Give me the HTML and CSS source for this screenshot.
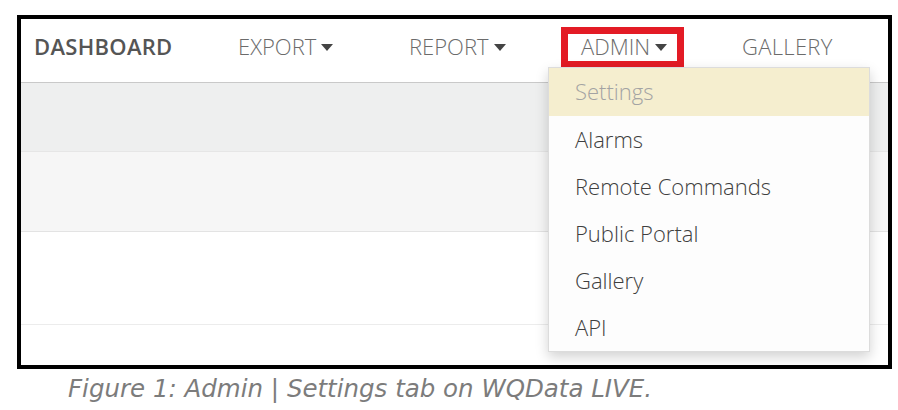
FILE: index.html
```html
<!DOCTYPE html>
<html>
<head>
<meta charset="utf-8">
<link rel="stylesheet" href="styles.css">
</head>
<body>
<div class="figure">
  <nav class="nav">
    <a class="nav-item nav-home">DASHBOARD</a>
    <a class="nav-item nav-export">EXPORT<span class="caret"></span></a>
    <a class="nav-item nav-report">REPORT<span class="caret"></span></a>
    <a class="nav-item nav-admin">ADMIN<span class="caret"></span></a>
    <a class="nav-item nav-gallery">GALLERY</a>
  </nav>
  <div class="band band-a"></div>
  <div class="band band-b"></div>
  <div class="band band-c"></div>
  <div class="band band-d"></div>
  <div class="highlight-box"></div>
  <ul class="dropdown">
    <li class="dd-item dd-active">Settings</li>
    <li class="dd-item">Alarms</li>
    <li class="dd-item">Remote Commands</li>
    <li class="dd-item">Public Portal</li>
    <li class="dd-item">Gallery</li>
    <li class="dd-item">API</li>
  </ul>
</div>
<p class="caption">Figure 1: Admin | Settings tab on WQData LIVE.</p>
</body>
</html>
```
FILE: styles.css
```css
* { box-sizing: border-box; }
html, body { margin: 0; padding: 0; background: #fff; }
body { width: 898px; height: 410px; overflow: hidden; font-family: "Open Sans", "Liberation Sans", sans-serif; }

.figure {
  position: relative;
  margin: 15px 0 0 17px;
  width: 875px;
  height: 354px;
  border: 4px solid #000;
  background: #fff;
  display: flex;
  flex-direction: column;
}

.nav {
  height: 64px;
  border-bottom: 1px solid #c9c9c9;
  display: flex;
  align-items: flex-start;
  padding: 14px 0 0 13px;
  font-size: 22px;
  line-height: 26px;
}
.nav-item {
  color: #6b6b6b;
  font-weight: 300;
  display: flex;
  align-items: center;
  white-space: nowrap;
}
.nav-home { font-weight: 600; color: #555; width: 204px; letter-spacing: 0.3px; }
.nav-export { width: 171px; }
.nav-report { width: 172px; }
.nav-admin { width: 161px; }
.nav-gallery { letter-spacing: 0.3px; }
.caret {
  display: inline-block;
  width: 0; height: 0;
  margin-left: 5px;
  margin-top: 2px;
  border-left: 6px solid transparent;
  border-right: 6px solid transparent;
  border-top: 7px solid #444;
}

.band { flex: none; }
.band-a { height: 69px; background: #eeefef; border-bottom: 1px solid #e6e6e6; }
.band-b { height: 80px; background: #f6f6f6; border-bottom: 1px solid #e3e3e3; }
.band-c { height: 93px; background: #fff; border-bottom: 1px solid #ececec; }
.band-d { flex: 1; background: #fff; }

.highlight-box {
  position: absolute;
  left: 540px;
  top: 8px;
  width: 123px;
  height: 41px;
  border: 7px solid #e31b25;
}

.dropdown {
  position: absolute;
  left: 527px;
  top: 48px;
  width: 322px;
  margin: 0;
  padding: 0;
  list-style: none;
  background: #fdfdfd;
  border: 1px solid #dcdcdc;
  box-shadow: 0 5px 12px rgba(0,0,0,0.18);
}
.dd-item {
  height: 47px;
  padding-left: 26px;
  font-size: 22px;
  line-height: 46px;
  font-weight: 300;
  color: #3f3f3f;
}
.dd-active { background: #f5eecf; color: #a3a3a3; height: 48px; }

.caption {
  margin: 5px 0 0 68px;
  font-family: "DejaVu Sans", Verdana, sans-serif;
  font-style: italic;
  font-size: 24.5px;
  line-height: 30px;
  color: #7c7c7c;
}
```
